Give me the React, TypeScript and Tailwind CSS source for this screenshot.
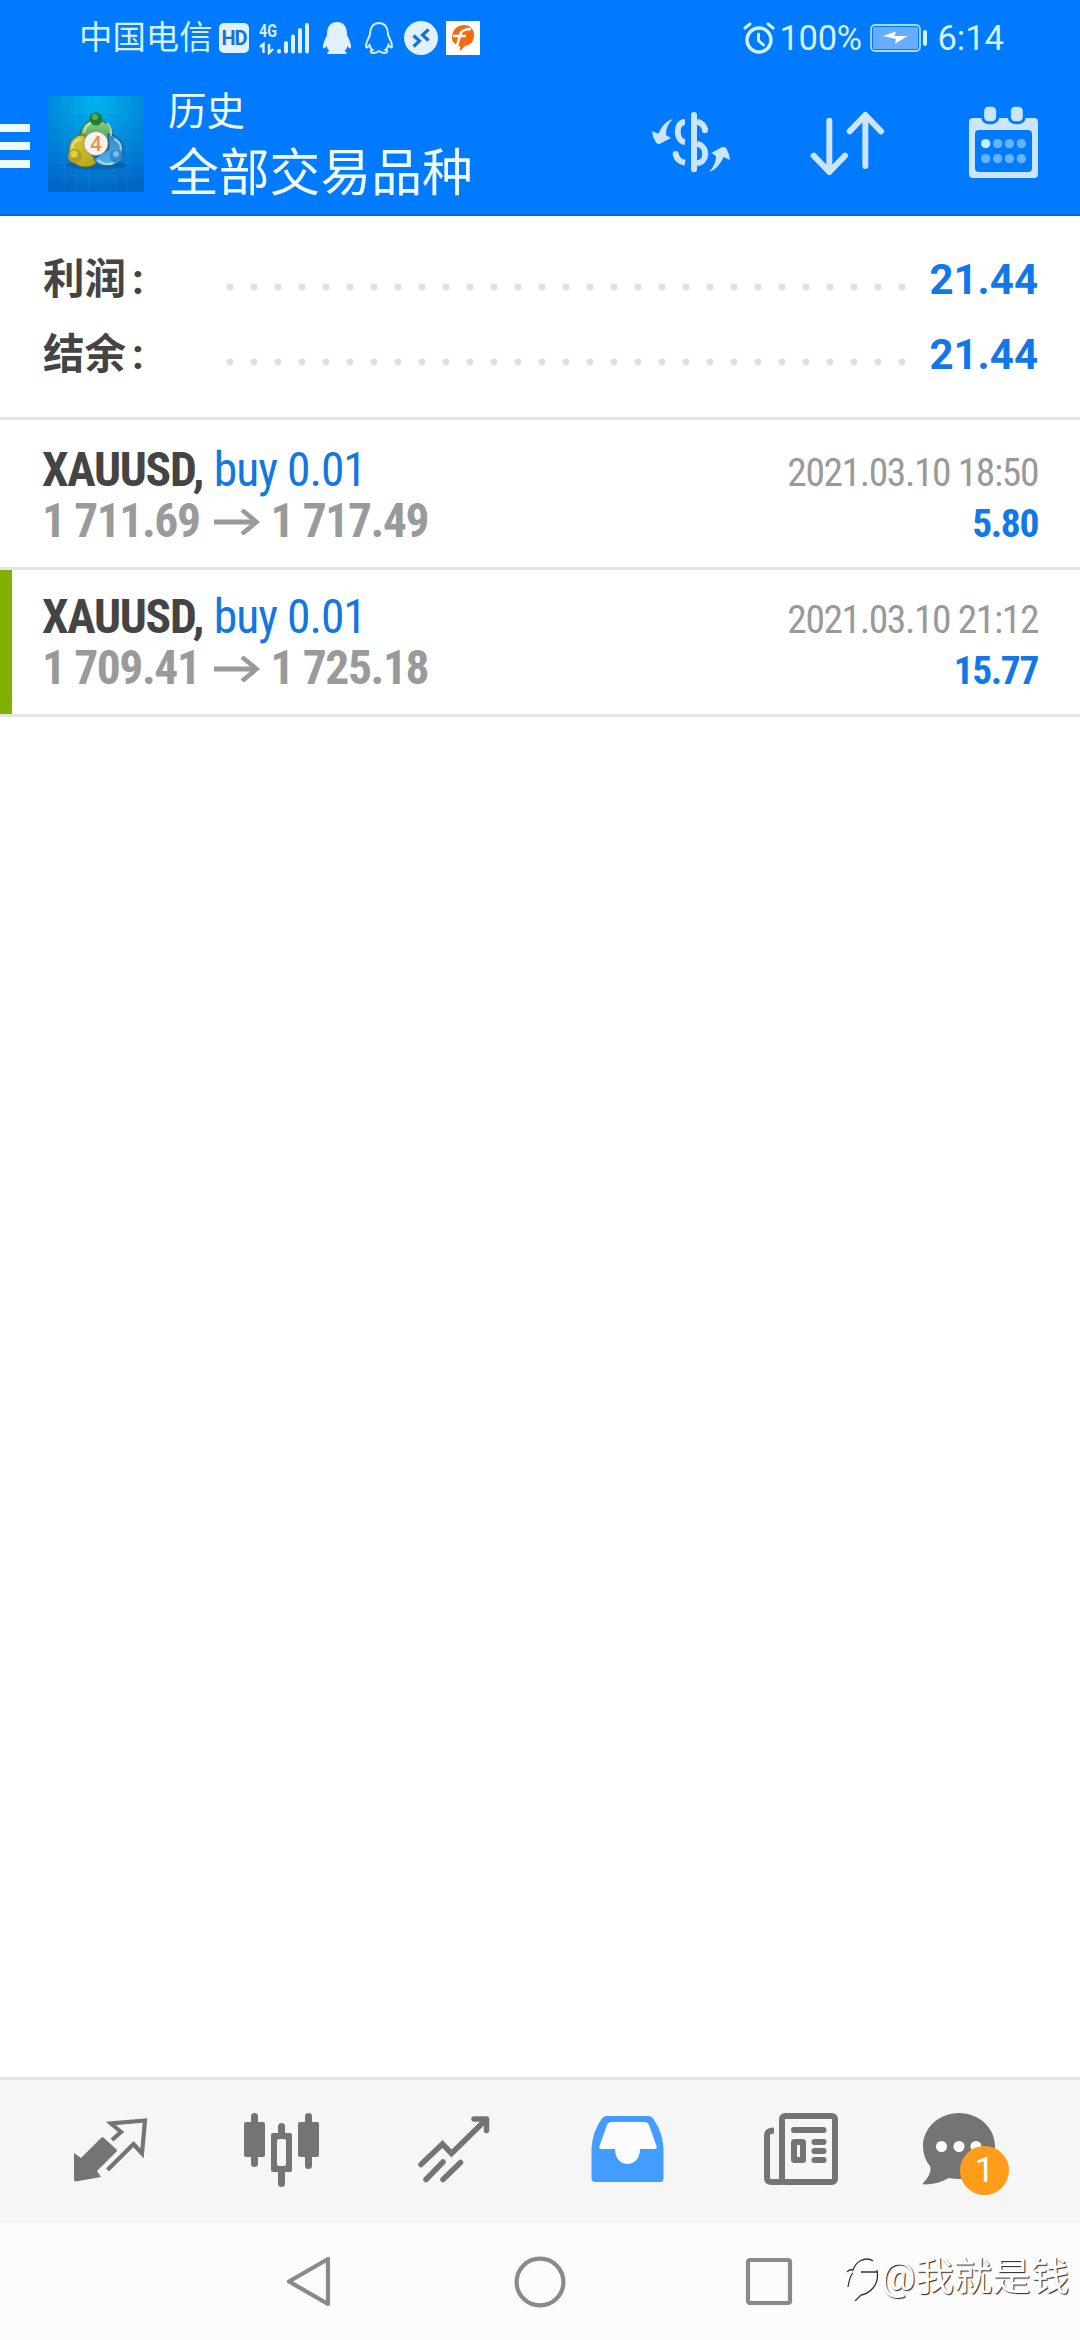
import type { ReactNode } from "react";

const totals = [
  { label: "利润", value: "21.44" },
  { label: "结余", value: "21.44" },
];

const deals = [
  { symbol: "XAUUSD", side: "buy 0.01", open: "1 711.69", close: "1 717.49", time: "2021.03.10 18:50", profit: "5.80", marked: false },
  { symbol: "XAUUSD", side: "buy 0.01", open: "1 709.41", close: "1 725.18", time: "2021.03.10 21:12", profit: "15.77", marked: true },
];

function StatusBar() {
  return (
    <div className="flex h-[75px] items-center pl-[79px] pr-[76px] text-[#d5f0ff]">
      <span className="w-[140px] whitespace-nowrap text-[33.400px] leading-[40px]">中国电信</span>
      <span className="flex h-[30px] w-[30px] items-center justify-center rounded-[5px] bg-[#e2f1ff] text-[20px] font-bold leading-none tracking-[-1px] text-[#1a6fd8]">
        HD
      </span>
      {/* Signal */}
      <div className="relative ml-[10px] h-[34px] w-[52px]">
        <span className="absolute left-0 top-0 origin-left scale-x-75 text-[19px] font-bold leading-[19px]">4G</span>
        <svg viewBox="0 0 52 34" className="h-[34px] w-[52px]" fill="none" stroke="#e2f1ff">
          <path d="M1 26l3.500-3v9M10 23v9l4-4" strokeWidth="2.400" />
          <path d="M20 30v.5M27 22v8.500M34 15.500v15M41 9v21.500M48 4v26.500" strokeWidth="4" strokeLinecap="round" />
        </svg>
      </div>
      <svg viewBox="0 0 30 34" className="ml-[11px] h-[34px] w-[30px]" fill="#e2f1ff">
        <path d="M15 1C8 1 5 6 5 13c0 3-4 7-4 13 0 3 2 1 3.500-1 .5 2 1.500 4 3 5-3 1-3 3 0 3h15c3 0 3-2 0-3 1.500-1 2.500-3 3-5C27 27 29 29 29 26c0-6-4-10-4-13C25 6 22 1 15 1z" />
      </svg>
      <svg viewBox="0 0 30 34" className="ml-[12px] h-[34px] w-[30px]" fill="none" stroke="#d5f0ff" strokeWidth="2">
        <path d="M15 2C9 2 6 7 6 13c0 3-4 7-4 12 0 3 2 1 3.500-1 .5 2 1.500 4 3 5-3 1-2 3 1 3 2 0 4-1 5.500-2 1.500 1 3.500 2 5.500 2 3 0 4-2 1-3 1.500-1 2.500-3 3-5C26 26 28 28 28 25c0-5-4-9-4-12C24 7 21 2 15 2z" />
      </svg>
      <svg viewBox="0 0 34 34" className="ml-[10px] h-[34px] w-[34px]">
        <circle cx="17" cy="17" r="17" fill="#e2f1ff" />
        <path d="M9.500 14.500l6 5.500-6 5.500M24.500 8.500l-6 5.500 6 5.500" fill="none" stroke="#1a6fd8" strokeWidth="3.200" />
      </svg>
      <svg viewBox="0 0 34 34" className="ml-[8px] h-[34px] w-[34px]">
        <path d="M0 0h34v34H0z" fill="#fff" />
        <path d="M6 17C6 9 11 4 18 4c6 0 10 4 10 10 0 8-5 10-9 11l-5 5v-5C9 24 6 21 6 17z" fill="#f36c12" />
        <path d="M10 26c2-3 3-8 4-12 1-4 4-6 11-6M7 15h13" fill="none" stroke="#fff" strokeWidth="2.400" />
      </svg>

      <svg viewBox="0 0 32 32" className="ml-auto h-[32px] w-[32px]" fill="none" stroke="#d5f0ff" strokeLinecap="round">
        <circle cx="16" cy="18" r="12" strokeWidth="3.400" />
        <path d="M15.500 12v6.500l5 4.500" strokeWidth="3" />
        <path d="M2 6l5-4M30 6l-5-4" strokeWidth="3" />
      </svg>
      <span className="ml-[4px] w-[91px] whitespace-nowrap text-[34.500px] leading-[40px] tracking-[-0.3px]">100%</span>
      <svg viewBox="0 0 58 28" className="h-[28px] w-[58px]">
        <rect x="1" y="1" width="49" height="26" rx="4" fill="none" stroke="#a9d8ff" strokeWidth="1.800" />
        <rect x="3" y="3" width="45" height="22" rx="1.500" fill="#66acff" />
        <path d="M13 12l13-4.500-1.500 4.500h13L25 20l1-5z" fill="#fff" />
        <rect x="53" y="6" width="4" height="16" rx="2" fill="#d5f0ff" />
      </svg>
      <span className="ml-[9px] whitespace-nowrap text-[34.500px] leading-[40px]">6:14</span>
    </div>
  );
}

function AppLogo() {
  return (
    <svg viewBox="0 0 96 96" className="h-24 w-24">
      <defs>
        <radialGradient id="sky" cx="50%" cy="5%" r="95%">
          <stop offset="0" stopColor="#00b4ee" />
          <stop offset="0.5" stopColor="#008bdc" />
          <stop offset="1" stopColor="#0066c6" />
        </radialGradient>
        <linearGradient id="green" x2="0" y2="1">
          <stop offset="0" stopColor="#8fce88" />
          <stop offset="1" stopColor="#2b8a2c" />
        </linearGradient>
        <linearGradient id="gold" x2="1" y2="1">
          <stop offset="0" stopColor="#d8cf35" />
          <stop offset="1" stopColor="#b79d16" />
        </linearGradient>
        <linearGradient id="azure" x2="0" y2="1">
          <stop offset="0" stopColor="#2c86c8" />
          <stop offset="1" stopColor="#57b6ec" />
        </linearGradient>
      </defs>
      <path d="M0 0h96v96H0z" fill="url(#sky)" />
      <path
        d="M16 0v96M28 0v96M41 0v96M54 0v96M67 0v96M80 0v96M0 16h96M0 28h96M0 41h96M0 54h96M0 67h96M0 80h96"
        stroke="#fff"
        strokeOpacity="0.060"
      />
      <ellipse cx="48" cy="69" rx="30" ry="5" fill="#00417f" opacity="0.350" />
      {/* Three interlocked figures */}
      <path d="M32 42c0-12 7-18 16-18s17 7 17 17c0 7-3 11-5 13L37 45z" fill="url(#green)" stroke="#1d5f35" strokeWidth="1" />
      <path d="M37 39c-11-1-16 7-16 16 0 10 7 16 17 16 6 0 9-3 11-5L37 50z" fill="url(#gold)" stroke="#6c6d20" strokeWidth="1" />
      <path d="M60 38c11 1 15 9 15 17 0 10-7 15-16 15-7 0-11-3-13-7l15-10z" fill="url(#azure)" stroke="#15507f" strokeWidth="1" />
      <path d="M36 37c1-6 4-9 8-11M59 27c3 3 5 7 4 13M24 52c1-5 4-8 9-9M66 43c5 2 7 6 7 11M50 64c4 4 10 5 15 3" fill="none" stroke="#e6f8d4" strokeWidth="2" strokeOpacity="0.600" />
      <circle cx="48" cy="23" r="6.500" fill="#237f2b" />
      <circle cx="47" cy="21" r="3" fill="#77bd75" opacity="0.700" />
      <circle cx="27" cy="60" r="7" fill="#b4a01c" />
      <circle cx="26" cy="58" r="3.500" fill="#e7dc68" opacity="0.800" />
      <circle cx="68" cy="60" r="6.500" fill="#3289cb" />
      <circle cx="68" cy="58" r="3" fill="#8bcaf3" opacity="0.800" />
      <circle cx="48" cy="47.500" r="12" fill="#f5f3f2" stroke="#777" strokeWidth="0.500" />
      <text x="48" y="55" textAnchor="middle" fontSize="21" fontWeight="500" fill="#f0924a">4</text>
    </svg>
  );
}

function Header() {
  return (
    <header className="flex h-[141px] border-b-2 border-[#0567d8] text-[#eefaff]">
      <div className="mt-[49px] flex w-[30px] flex-col gap-[10px]">
        <span className="h-2 bg-[#eefaff]" />
        <span className="h-2 bg-[#eefaff]" />
        <span className="h-2 bg-[#eefaff]" />
      </div>
      <div className="ml-[18px] mt-[21px]">
        <AppLogo />
      </div>
      <div className="ml-[24px] flex flex-col whitespace-nowrap">
        <span className="mt-[13px] text-[38.500px] leading-[48px]">历史</span>
        <span className="mt-[6px] text-[50.800px] leading-[64px]">全部交易品种</span>
      </div>

      <div className="ml-auto flex pt-[30px] pr-[40px]">
        {/* Deals filter */}
        <svg viewBox="90 60 240 225" className="h-[75px] w-[80px]" fill="none" stroke="#cce5ff" strokeWidth="18">
          <path d="M219 90v163" strokeLinecap="round" />
          <path d="M192 111C163 111 163 168 192 171M164 207Q168 229 192 233" />
          <path d="M228 110Q249 116 253 136M228 176C261 184 261 230 228 235" />
          <circle cx="164" cy="207" r="9" fill="#cce5ff" stroke="none" />
          <circle cx="252" cy="136" r="9" fill="#cce5ff" stroke="none" />
          <path
            d="M155 102Q134 124 135 150L150 159 115 177Q108 178 104 171 94 155 93 138L112 146Q128 109 155 102zM264 261Q286 238 285 213L271 204 302 187Q310 184 316 190 325 206 327 225L308 216Q292 252 264 261z"
            fill="#cce5ff"
            stroke="none"
          />
        </svg>
        {/* Sort */}
        <svg viewBox="560 60 240 225" className="ml-[77px] h-[75px] w-[80px]" fill="none" stroke="#cce5ff" strokeWidth="18" strokeLinecap="round" strokeLinejoin="round">
          <path d="M624 107v154M577 212l47 49 47-49M732 243V90M685 139l47-49 47 49" />
        </svg>
        {/* Period */}
        <svg viewBox="1038 60 219 225" className="ml-[79px] h-[75px] w-[73px]">
          <path
            d="M1056 99H1239Q1251 99 1251 111V267Q1251 279 1239 279H1056Q1044 279 1044 267V111Q1044 99 1056 99zM1074 135Q1062 135 1062 147V249Q1062 261 1074 261H1221Q1233 261 1233 249V147Q1233 135 1221 135z"
            fill="#cce5ff"
            fillRule="evenodd"
          />
          <g fill="#cce5ff" stroke="#007aff" strokeWidth="9">
            <rect x="1085" y="61" width="45" height="52" rx="17" />
            <rect x="1165" y="61" width="45" height="52" rx="17" />
          </g>
          <g fill="#66b3ff">
            <circle cx="1094" cy="176" r="14" fill="#cceaff" />
            <circle cx="1130" cy="176" r="14" />
            <circle cx="1165" cy="176" r="14" />
            <circle cx="1201" cy="176" r="14" />
            <circle cx="1094" cy="221" r="14" />
            <circle cx="1130" cy="221" r="14" />
            <circle cx="1165" cy="221" r="14" />
            <circle cx="1201" cy="221" r="14" />
          </g>
        </svg>
      </div>
    </header>
  );
}

function TabIcon({ children }: { children: ReactNode }) {
  return (
    <div className="relative flex flex-1 justify-center pt-5">
      {children}
    </div>
  );
}

function TabBar() {
  return (
    <nav className="flex h-[146px] border-t-[3px] border-[#e4e4e4] bg-[#f6f6f6] px-6 text-[#747474]">
      <TabIcon>
        <svg viewBox="62 2100 96 96" className="h-24 w-24" fill="none" stroke="currentColor">
          <path d="M74 2153l7 5 20-20q1.500-1.500 3 0l12 11q2 1.500 0 3L97 2171l4 6-25 4.500q-2 0-2-2z" fill="currentColor" stroke="none" />
          <path d="M112 2140l9-8-10-8.500 34-3-3 33-8.500-9.500-26 26" strokeWidth="4.200" />
        </svg>
      </TabIcon>
      <TabIcon>
        <svg viewBox="234 2100 96 96" className="h-24 w-24" fill="currentColor">
          <rect x="251" y="2113" width="7" height="54" rx="3.500" />
          <rect x="244" y="2122" width="21" height="35" rx="2" />
          <rect x="305" y="2113" width="7" height="56" rx="3.500" />
          <rect x="298" y="2122" width="21" height="35" rx="2" />
          <rect x="278" y="2123" width="7" height="64" rx="3.500" />
          <rect x="271" y="2133" width="21" height="39" rx="2" />
          <rect x="277" y="2139" width="9" height="27" rx="2" fill="#f6f6f6" />
        </svg>
      </TabIcon>
      <TabIcon>
        <svg viewBox="406 2100 96 96" className="h-24 w-24" fill="none" stroke="currentColor" strokeWidth="5.500" strokeLinecap="round">
          <path d="M421 2164.500l21.500-20.500 9 9.500 34-33.500" />
          <path d="M474 2119h12.500v11.500" strokeLinejoin="round" />
          <path d="M443 2162l-17 17.500M460.500 2162.500l-17.500 17" />
        </svg>
      </TabIcon>
      <TabIcon>
        <svg viewBox="577 2100 96 96" className="h-24 w-24">
          <path d="M590.500 2148q1-16 9.500-28 2-4 6-4h41q4 0 6 4 8.500 12 9.500 28v30q0 4-4 4h-64q-4 0-4-4z" fill="#439cff" />
          <path d="M611 2122q-4 0-5 3l-7.500 21q-1 3 2 3h13.500c0 20 25 20 25 0h14.500q3 0 2-3l-7.500-21q-1-3-5-3z" fill="#fcfcfc" />
        </svg>
      </TabIcon>
      <TabIcon>
        <svg viewBox="749 2100 96 96" className="h-24 w-24" fill="none" stroke="currentColor" strokeWidth="6">
          <rect x="781" y="2116" width="53" height="66" rx="3" />
          <path d="M773 2130.500q-7 0-7 5v42q0 4.500 4.500 4.500H782" />
          <path d="M793 2130h29.500M813.500 2142h9M813.500 2151h9M813.500 2160h9" strokeLinecap="round" />
          <rect x="793" y="2142" width="9" height="18" rx="0.500" />
        </svg>
      </TabIcon>
      <TabIcon>
        <svg viewBox="921 2100 96 96" className="h-24 w-24">
          <path d="M958 2113c20 0 36 15 36 33s-16 33-36 33q-5 0-10-1-11 6-24 6.500-4 0-1-2.500 7-7 6.500-15-7.500-9-7.500-21c0-18 16-33 36-33z" fill="currentColor" />
          <circle cx="940.500" cy="2146.500" r="5.500" fill="#fff" />
          <circle cx="958" cy="2146.500" r="5.500" fill="#fff" />
          <circle cx="975" cy="2146.500" r="5.500" fill="#fff" />
        </svg>
        <span className="absolute left-[76px] top-[66px] flex h-[49px] w-[49px] items-center justify-center rounded-full bg-[#ff9c1a] text-[35px] leading-none text-white">
          1
        </span>
      </TabIcon>
    </nav>
  );
}

function SystemNav() {
  return (
    <div className="relative flex h-[117px] bg-[#fcfcfc] pl-[284px] pt-[31px]">
      <svg viewBox="0 0 52 56" className="h-[56px] w-[52px]" fill="none" stroke="#8a8a8a" strokeWidth="4.200" strokeLinejoin="round">
        <path d="M44 5v45L5 27.500z" />
      </svg>
      <svg viewBox="0 0 56 56" className="ml-[176px] h-[56px] w-[56px]" fill="none" stroke="#8a8a8a" strokeWidth="4.200">
        <circle cx="28" cy="28" r="23.400" />
      </svg>
      <svg viewBox="0 0 56 56" className="ml-[173px] h-[56px] w-[56px]" fill="none" stroke="#8a8a8a" strokeWidth="4.200">
        <rect x="7" y="6" width="42" height="43" rx="2" />
      </svg>
      {/* Watermark */}
      <div className="absolute left-[845px] top-[32px] flex items-start whitespace-nowrap text-[38.400px] leading-[44px] text-white [text-shadow:1px_1px_1px_#222]">
        <svg viewBox="0 0 36 46" className="h-[46px] w-[36px]" fill="none" stroke="#333" strokeWidth="1.300">
          <path d="M2 17q2-3 6-2 2-6 7-9 8-4 13 0M32 15q2 11-4 18-5 6-12 7l-6 6M3 32q2-12 5-14M16 17h16" />
        </svg>
        <span>@我就是钱</span>
      </div>
    </div>
  );
}

export default function App() {
  return (
    <div className="flex h-[2340px] w-[1080px] flex-col overflow-hidden bg-white font-['Roboto','Noto_Sans_CJK_SC',sans-serif]">
      <div className="bg-[#007aff]">
        <StatusBar />
        <Header />
      </div>

      <section className="h-[204px] border-b-[3px] border-[#e4e4e4] pt-[26px] pl-[43px] pr-[42px]">
        {totals.map((row) => (
          <div key={row.label} className="flex h-[75px] items-center text-[42px] font-bold leading-[75px]">
            <span className="w-[175px] whitespace-nowrap text-[#444]">
              <span className="text-[41.500px]">{row.label}</span>
              <span className="ml-[6px]">:</span>
            </span>
            <span className="mt-[15px] h-6 w-[696px] bg-[radial-gradient(circle,#e0e0e0_3px,transparent_4px)] bg-[length:24px_24px]" />
            <span className="ml-auto text-[#1277e8]">{row.value}</span>
          </div>
        ))}
      </section>

      <ul className="flex-1 pt-[3px] font-['Roboto_Condensed','Roboto',sans-serif]">
        {deals.map((deal) => (
          <li key={deal.time} className="relative flex h-[147px] justify-between border-b-[3px] border-[#e4e4e4] pl-[42px] pr-[42px] pt-[22px]">
            {deal.marked && <span className="absolute left-0 top-0 h-full w-3 bg-[#80b000]" />}
            <div className="whitespace-nowrap text-[47.500px] leading-[51px]">
              <div>
                <span className="font-bold tracking-[-1.3px] text-[#444]">{deal.symbol},</span>{" "}
                <span className="tracking-[-1px] text-[#1277e0]">{deal.side}</span>
              </div>
              <div className="flex items-center font-bold tracking-[-1.4px] text-[#999a9c]">
                <span>{deal.open}</span>
                <svg viewBox="0 0 46 26" className="ml-[14px] mr-[11px] h-[26px] w-[46px]" fill="none" stroke="currentColor">
                  <path d="M0 13h42" strokeWidth="5" />
                  <path d="M28 1l14.500 12L28 25" strokeWidth="4.600" />
                </svg>
                <span>{deal.close}</span>
              </div>
            </div>
            <div className="whitespace-nowrap pt-[2px] text-right text-[39.500px] leading-[51px] tracking-[-1.4px]">
              <div className="text-[#999]">{deal.time}</div>
              <div className="font-bold text-[#1277e8]">{deal.profit}</div>
            </div>
          </li>
        ))}
      </ul>

      <TabBar />
      <SystemNav />
    </div>
  );
}
